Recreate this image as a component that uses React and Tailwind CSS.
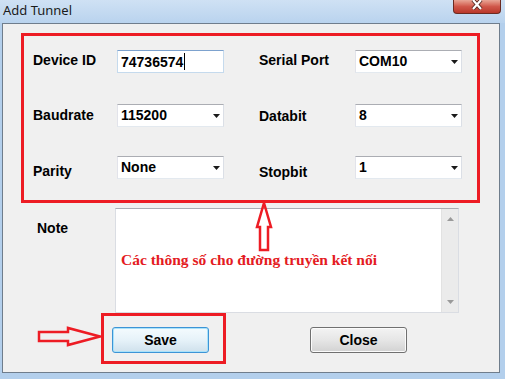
import React from "react";

const Arrow = () => (
  <svg width="7" height="4" viewBox="0 0 7 4" className="block">
    <path d="M0 0H7L3.5 4Z" fill="#1a1a1a" />
  </svg>
);

function Field({ value, focused, arrow, cursor }) {
  return (
    <div
      className={
        "w-[107px] h-[23px] bg-white border flex items-start " +
        (focused
          ? "border-[#c5daed] border-t-[#7da2ce]"
          : "border-t-[#abadb3] border-l-[#e2e3ea] border-r-[#dbdfe6] border-b-[#e3e9ef]")
      }
    >
      <div className="pl-[3px] pt-[2px] text-[14px] leading-[16px] font-bold text-black flex items-center">
        {value}
        {cursor && <span className="inline-block w-px h-[17px] bg-black ml-[1px]" />}
      </div>
      {arrow && (
        <div className="ml-auto mr-[3px] self-center mt-[1px]">
          <Arrow />
        </div>
      )}
    </div>
  );
}

function Row({ l1, v1, l2, v2, mt1, mt2, focused, arrow1, cursor, top }) {
  return (
    <div className={"flex items-start h-[23px] " + top}>
      <div className={"w-[84px] text-[14px] leading-[16px] font-bold text-black " + mt1}>{l1}</div>
      <Field value={v1} focused={focused} arrow={arrow1} cursor={cursor} />
      <div className={"w-[96px] ml-[35px] text-[14px] leading-[16px] font-bold text-black " + mt2}>{l2}</div>
      <Field value={v2} arrow />
    </div>
  );
}

export default function App() {
  return (
    <div className="w-[505px] h-[379px] relative overflow-hidden flex flex-col bg-[#b3cfec] font-['Liberation_Sans',Arial,sans-serif]">
      {/* title bar */}
      <div className="h-[23px] flex items-start bg-gradient-to-b from-[#cfe1f4] to-[#b9d3ee]">
        <div className="pl-[3px] pt-[2px] text-[13px] leading-[17px] text-[#1b1b1b] font-['Noto_Sans',sans-serif]">
          Add Tunnel
        </div>
        <div className="ml-auto mr-[4px] w-[48px] h-[14px] rounded-b-[4px] border border-t-0 border-[#6b2b22] bg-gradient-to-b from-[#e8a596] via-[#d0574a] to-[#b9372a] flex justify-center items-start">
          <svg width="12" height="10" viewBox="0 0 12 10" className="block">
            <path d="M2 0L10 9M10 0L2 9" stroke="#5a2a22" strokeWidth="4" />
            <path d="M2 0L10 9M10 0L2 9" stroke="#ffffff" strokeWidth="2.2" />
          </svg>
        </div>
      </div>

      {/* client area */}
      <div className="ml-[2px] w-[498px] h-[350px] border border-[#6f7d8c] bg-[#f0f0f0] flex flex-col pl-[18px] pt-[9px]">
        {/* red box */}
        <div className="w-[459px] h-[170px] border-[3px] border-[#ed1c24] pl-[9px] pt-[14px] flex flex-col">
          <Row l1="Device ID" v1="74736574" l2="Serial Port" v2="COM10" mt1="mt-[2px]" mt2="mt-[2px]" focused cursor top="" />
          <Row l1="Baudrate" v1="115200" l2="Databit" v2="8" mt1="mt-[3px]" mt2="mt-[4px]" arrow1 top="mt-[31px]" />
          <Row l1="Parity" v1="None" l2="Stopbit" v2="1" mt1="mt-[7px]" mt2="mt-[8px]" arrow1 top="mt-[29px]" />
        </div>

        {/* note */}
        <div className="flex items-start mt-[5px] ml-[16px]">
          <div className="w-[78px] mt-[12px] text-[14px] leading-[16px] font-bold text-black">Note</div>
          <div className="w-[344px] h-[105px] bg-white border border-[#dadde3] border-t-[#abadb3] flex">
            <div className="flex-1 pl-[5px] pt-[42px] text-[15.5px] leading-[18px] font-bold text-[#e41b23] font-['Liberation_Serif','Times_New_Roman',serif] whitespace-nowrap">
              Các thông số cho đường truyền kết nối
            </div>
            <div className="w-[17px] h-full bg-[#ebebeb] border-l border-[#e2e2e2] flex flex-col items-center justify-between py-[8px]">
              <svg width="7" height="4" viewBox="0 0 7 4" className="block">
                <path d="M0 4H7L3.5 0Z" fill="#9a9a9a" />
              </svg>
              <svg width="7" height="4" viewBox="0 0 7 4" className="block">
                <path d="M0 0H7L3.5 4Z" fill="#9a9a9a" />
              </svg>
            </div>
          </div>
        </div>

        {/* buttons */}
        <div className="flex mt-[14px] ml-[91px]">
          <button className="w-[97px] h-[26px] rounded-[3px] border border-[#3c94d6] bg-gradient-to-b from-[#f4fbfe] via-[#e6f2f9] to-[#cfe1ec] shadow-[inset_0_0_0_1px_#a9e2fa] text-[14px] font-bold text-black leading-[16px]">
            Save
          </button>
          <button className="ml-[101px] w-[97px] h-[26px] rounded-[3px] border border-[#707070] bg-gradient-to-b from-[#f3f3f3] via-[#e6e6e6] to-[#d2d2d2] shadow-[inset_0_0_0_1px_#fbfbfb] text-[14px] font-bold text-black leading-[16px]">
            Close
          </button>
        </div>
      </div>

      {/* annotations */}
      <svg className="absolute left-[254px] top-[201px]" width="22" height="52" viewBox="0 0 22 52">
        <path d="M10 2 L17 26 L14 26 L14 49 L6 49 L6 26 L3 26 Z" fill="none" stroke="#ed1c24" strokeWidth="2.5" strokeLinejoin="miter" />
      </svg>
      <svg className="absolute left-[36px] top-[325px]" width="68" height="24" viewBox="0 0 68 24">
        <path d="M3 7 L32 7 L32 3 L64 11.5 L32 20 L32 16 L3 16 Z" fill="none" stroke="#ed1c24" strokeWidth="2.5" />
      </svg>
      <div className="absolute left-[101px] top-[313px] w-[125px] h-[51px] border-[3px] border-[#ed1c24]" />
    </div>
  );
}
